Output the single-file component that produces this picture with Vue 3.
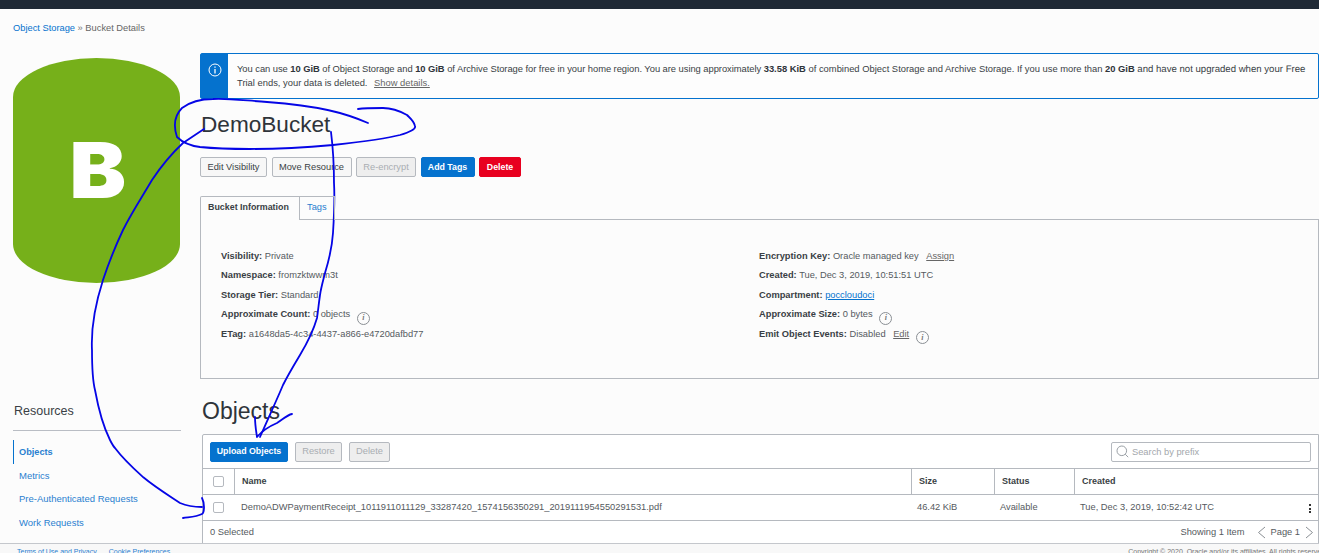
<script setup>
const leftDetails = [
  { label: 'Visibility:', value: 'Private' },
  { label: 'Namespace:', value: 'fromzktwwm3t' },
  { label: 'Storage Tier:', value: 'Standard' },
  { label: 'Approximate Count:', value: '0 objects', info: true },
  { label: 'ETag:', value: 'a1648da5-4c34-4437-a866-e4720dafbd77' },
]
const resources = ['Objects', 'Metrics', 'Pre-Authenticated Requests', 'Work Requests']
</script>

<template>
  <div class="page">
    <div class="topbar"></div>
    <nav class="crumbs"><a>Object Storage</a> <span class="sep">»</span> Bucket Details</nav>
    <div class="body">
      <aside class="side">
        <div class="cyl"><span>B</span></div>
        <h3 class="res-title">Resources</h3>
        <ul class="res-list">
          <li v-for="(r, i) in resources" :key="r" :class="{ active: i === 0 }">{{ r }}</li>
        </ul>
      </aside>
      <main class="main">
        <div class="banner">
          <div class="banner-icon">
            <svg width="14" height="14" viewBox="0 0 14 14" fill="none" stroke="#fff" stroke-width="1">
              <circle cx="7" cy="7" r="6" />
              <path d="M7 6v4.5M7 3.4v1.4" stroke-width="1.3" />
            </svg>
          </div>
          <div class="banner-text">
            <p><span class="seg1">You can use <b>10 GiB</b> of Object Storage and <b>10 GiB</b> of Archive Storage for free in your home region. You are using approximately </span><b>33.58 KiB</b> of combined Object Storage and Archive Storage. If you use more than <b>20 GiB</b> <span class="seg3">and have not upgraded when your Free</span></p>
            <p>Trial ends, your data is deleted. <a class="plain-link show">Show details.</a></p>
          </div>
        </div>
        <h1 class="title">DemoBucket</h1>
        <div class="actions">
          <button class="btn a-edit">Edit Visibility</button>
          <button class="btn a-move">Move Resource</button>
          <button class="btn off a-enc">Re-encrypt</button>
          <button class="btn blue a-tags">Add Tags</button>
          <button class="btn red a-del">Delete</button>
        </div>
        <div class="tabs">
          <div class="tab on">Bucket Information</div>
          <div class="tab">Tags</div>
        </div>
        <section class="panel">
          <div class="col">
            <div v-for="d in leftDetails" :key="d.label" class="row">
              <b>{{ d.label }}</b> {{ d.value }}
              <span v-if="d.info" class="info">i</span>
            </div>
          </div>
          <div class="col col2">
            <div class="row"><b>Encryption Key:</b> Oracle managed key <a class="plain-link lnk">Assign</a></div>
            <div class="row"><b>Created:</b> Tue, Dec 3, 2019, 10:51:51 UTC</div>
            <div class="row"><b>Compartment:</b> <a class="blue-link">poccloudoci</a></div>
            <div class="row"><b>Approximate Size:</b> 0 bytes <span class="info">i</span></div>
            <div class="row"><b>Emit Object Events:</b> Disabled <a class="plain-link lnk">Edit</a> <span class="info">i</span></div>
          </div>
        </section>
        <h2 class="objects">Objects</h2>
        <section class="table">
          <div class="toolbar">
            <button class="btn blue upload">Upload Objects</button>
            <button class="btn off restore">Restore</button>
            <button class="btn off del">Delete</button>
            <div class="search">
              <svg width="13" height="13" viewBox="0 0 13 13" fill="none" stroke="#9aa0a6" stroke-width="1">
                <circle cx="5.8" cy="5.8" r="4.8" />
                <path d="M9.2 9.2l3 3" />
              </svg>
              <span>Search by prefix</span>
            </div>
          </div>
          <div class="grid head">
            <div class="cell chk"><i class="box"></i></div>
            <div class="cell">Name</div>
            <div class="cell">Size</div>
            <div class="cell">Status</div>
            <div class="cell">Created</div>
          </div>
          <div class="grid data">
            <div class="cell chk"><i class="box"></i></div>
            <div class="cell">DemoADWPaymentReceipt_1011911011129_33287420_1574156350291_2019111954550291531.pdf</div>
            <div class="cell">46.42 KiB</div>
            <div class="cell">Available</div>
            <div class="cell created">Tue, Dec 3, 2019, 10:52:42 UTC<span class="kebab"><i></i><i></i><i></i></span></div>
          </div>
          <div class="tfoot">
            <span>0 Selected</span>
            <span class="pager">
              <span class="showing">Showing 1 Item</span>
              <svg width="9" height="13" viewBox="0 0 9 13" fill="none" stroke="#8a8f94"><path d="M8 1L1.5 6.5 8 12" /></svg>
              <span>Page 1</span>
              <svg width="9" height="13" viewBox="0 0 9 13" fill="none" stroke="#8a8f94"><path d="M1 1l6.5 5.5L1 12" /></svg>
            </span>
          </div>
        </section>
      </main>
    </div>
    <footer class="foot">
      <span><a>Terms of Use and Privacy</a><a class="ck">Cookie Preferences</a></span>
      <span class="copy">Copyright © 2020, Oracle and/or its affiliates. All rights reserved.</span>
    </footer>
    <svg class="ink" width="1319" height="553" viewBox="0 0 1319 553" fill="none" stroke="#0505e6" stroke-width="1.8" stroke-linecap="round" stroke-linejoin="round">
      <path d="M368 123C345 113 320 106 267 102C240 100 225 98 213 99C200 99 190 102 182 108C175 115 173 125 177 137C184 144 192 146 200 147C220 149 235 149 250 149C285 149 310 147 333 145C360 142 385 139 400 135C410 132 416 129 415 126C414 121 410 118 407 115C398 110 390 108 383 108C375 108 365 108 358 109" />
      <path d="M204 129L183 143C170 155 160 168 152 180C142 197 132 212 123 230C115 247 108 265 103 280C95 305 91 330 92 350C92 365 92 378 95 390C99 412 104 428 110 440C112 444 113 446 115 448C124 460 133 468 143 477C155 487 168 495 180 503C187 506 195 507 202 507" />
      <path d="M202 498C204 502 204 505 204 507C204 510 204 513 202 514C196 517 189 517 183 518" />
      <path d="M331 132C333 148 334 165 334 183C335 200 334 217 333 233C332 248 329 260 325 273C323 281 321 288 320 295C319 302 318 311 317 318C313 332 306 345 300 355C294 365 288 375 283 385C278 397 272 410 260 437" />
      <path d="M255 417C255 425 256 430 257 437C262 431 270 426 277 423C282 420 287 415 292 414" />
    </svg>
  </div>
</template>

<style scoped>
.page { position: relative; width: 1319px; height: 553px; overflow: hidden; background: #fcfcfc; color: #3a3f45; font-family: "Liberation Sans", Arial, sans-serif; font-size: 9.5px; }
.topbar { height: 9px; background: #1f2935; }
.crumbs { height: 44px; box-sizing: border-box; padding: 14px 0 0 13px; line-height: 10px; font-size: 9.3px; color: #666; }
.crumbs a { color: #0572ce; }
.sep { color: #777; }
.body { display: flex; height: 491px; }
.side { width: 168px; margin: 5px 19px 0 13px; flex: none; }
.cyl { width: 167px; height: 225px; background: #76b01a; border-radius: 83.5px / 39px; display: flex; align-items: center; justify-content: center; padding-left: 3px; box-sizing: border-box; }
.cyl span { color: #fff; font-family: Inter, "Liberation Sans", sans-serif; font-weight: 900; font-size: 77px; line-height: 1; transform: scaleX(1.1); }
.res-title { margin: 121px 0 0; padding: 0 0 12px 1px; font-size: 12.5px; line-height: 14px; font-weight: 400; color: #3a3f45; border-bottom: 1px solid #b9bdc4; }
.res-list { list-style: none; margin: 9px 0 0; padding: 0; }
.res-list li { height: 23.6px; line-height: 23px; padding-left: 6px; color: #2a7fd0; font-size: 9.5px; }
.res-list li.active { border-left: 1px solid #0572ce; padding-left: 5px; font-weight: 700; font-size: 9.2px; line-height: 25px; }
.main { flex: 1; min-width: 0; }
.banner { height: 46px; box-sizing: border-box; border: 1px solid #0572ce; border-radius: 2px; display: flex; background: #fdfdfd; }
.banner-icon { width: 27px; flex: none; background: #0572ce; display: flex; justify-content: center; padding-top: 9px; box-sizing: border-box; }
.banner-text { margin: 8px 0 0 9px; line-height: 14px; font-size: 9.4px; color: #3a3f45; white-space: nowrap; }
.banner-text p { margin: 0; height: 13.5px; }
.banner-text b { color: #2f343a; }
.seg1 { letter-spacing: -0.045px; }
.seg3 { text-rendering: geometricPrecision; font-size: 9.6px; }
.show { margin-left: 4px; }
.plain-link { color: #666; text-decoration: underline; }
.title { margin: 13px 0 0 1px; height: 29px; font-size: 22.6px; line-height: 26px; font-weight: 400; color: #2f343a; }
.actions { display: flex; gap: 4.5px; margin-top: 16px; }
.btn { height: 20px; box-sizing: border-box; padding: 0; font: 9.3px/17px "Liberation Sans", Arial, sans-serif; border: 1px solid #b5b9bf; border-radius: 2px; background: #f7f7f7; color: #3a3f45; white-space: nowrap; }
.a-edit { width: 67px; }
.a-move { width: 80px; }
.a-enc { width: 60px; }
.a-tags { width: 54px; }
.a-del { width: 42px; }
.btn.off { background: #eeeeee; color: #a9adb2; }
.btn.blue { background: #0572ce; border-color: #0572ce; color: #fff; font-weight: 700; font-size: 8.8px; }
.btn.red { background: #e8001f; border-color: #e8001f; color: #fff; font-weight: 700; font-size: 8.8px; }
.tabs { display: flex; margin-top: 19px; height: 24px; }
.tab { box-sizing: border-box; height: 24px; padding: 0 7px; line-height: 21px; font-size: 9.3px; color: #2a7fd0; border: 1px solid #b5b9bf; border-left: 0; border-bottom: 0; position: relative; z-index: 1; white-space: nowrap; }
.tab.on { color: #3a3f45; font-weight: 700; font-size: 8.9px; width: 100px; border-left: 1px solid #b5b9bf; background: #fcfcfc; border-radius: 2px 0 0 0; }
.panel { margin-top: -1px; height: 160px; box-sizing: border-box; border: 1px solid #b5b9bf; display: flex; padding: 28px 0 0 20px; }
.col { width: 538px; flex: none; }
.row { height: 19.4px; line-height: 17px; font-size: 9.3px; color: #555a60; white-space: nowrap; }
.row b { color: #3a3f45; }
.lnk { margin-left: 5px; }
.blue-link { color: #0572ce; text-decoration: underline; }
.info { display: inline-flex; width: 11px; height: 11px; margin-left: 4px; border: 1px solid #8a8f94; border-radius: 50%; align-items: center; justify-content: center; font: italic 700 8px/1 "Liberation Serif", serif; color: #777; vertical-align: -3px; }
.objects { margin: 19px 0 0 2px; height: 36px; font-size: 23px; line-height: 26px; font-weight: 400; color: #2f343a; }
.table { height: 110px; box-sizing: border-box; border: 1px solid #b5b9bf; border-radius: 2px 0 0 0; background: #fff; margin-left: 2px; display: flex; flex-direction: column; }
.toolbar { height: 33px; flex: none; display: flex; align-items: center; gap: 7px; padding: 0 7px; box-sizing: border-box; }
.upload { width: 78px; }
.restore { width: 47px; }
.del { width: 41px; }
.search { margin-left: auto; width: 200px; height: 20px; box-sizing: border-box; border: 1px solid #b5b9bf; border-radius: 2px; display: flex; align-items: center; gap: 3px; padding-left: 4px; font-size: 9.3px; color: #a3a7ac; }
.grid { display: grid; grid-template-columns: 31px 677px 83px 80px 1fr; border-top: 1px solid #b5b9bf; height: 26px; flex: none; box-sizing: border-box; }
.cell { display: flex; align-items: center; padding: 0 0 1px 7px; font-size: 9.3px; color: #555a60; box-sizing: border-box; white-space: nowrap; }
.head .cell { font-weight: 700; font-size: 9px; color: #3a3f45; border-left: 1px solid #b5b9bf; }
.head .cell:first-child { border-left: 0; }
.data .cell { padding-left: 6px; }
.data .cell:nth-child(2) { padding-left: 7px; }
.chk, .data .chk { padding-left: 10px !important; }
.box { display: block; width: 9px; height: 9px; border: 1px solid #b5b9bf; border-radius: 2px; background: #fff; }
.created { position: relative; }
.kebab { position: absolute; right: 7px; top: 9px; display: flex; flex-direction: column; gap: 1.5px; }
.kebab i { display: block; width: 2px; height: 2px; background: #333; }
.tfoot { flex: 1; border-top: 1px solid #b5b9bf; display: flex; align-items: center; justify-content: space-between; padding: 0 4px 0 7px; font-size: 9.3px; color: #555a60; }
.pager { display: flex; align-items: center; gap: 5px; white-space: pre; }
.showing { margin-right: 7px; }
.foot { position: absolute; left: 0; right: 0; top: 543px; height: 20px; border-top: 1px solid #c4c7cc; background: #f8f8f8; display: flex; justify-content: space-between; padding: 4px 0 0 17px; box-sizing: border-box; font-size: 7px; color: #777; overflow: hidden; }
.foot a { color: #2a7fd0; }
.ck { margin-left: 12px; }
.copy { margin-right: -8px; flex: none; }
.ink { position: absolute; left: 0; top: 0; pointer-events: none; }
</style>
